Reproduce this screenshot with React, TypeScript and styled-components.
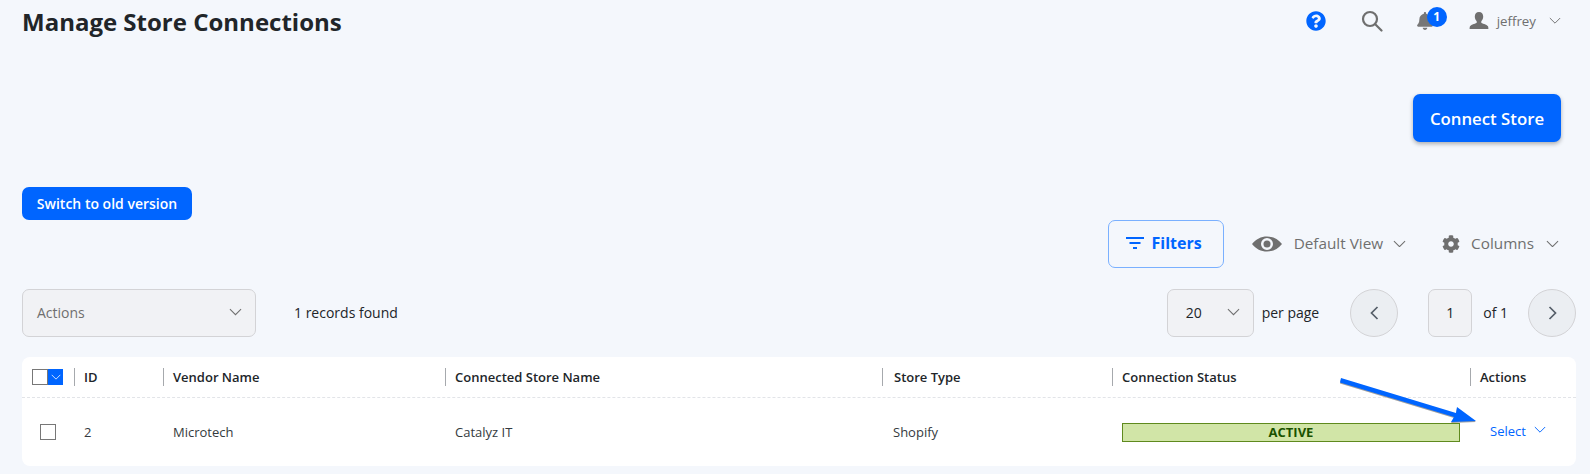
import React, { FC } from 'react';
import styled, { createGlobalStyle } from 'styled-components';
import { FaBell, FaCog, FaQuestionCircle } from 'react-icons/fa';

const GlobalStyle = createGlobalStyle`
  html, body {
    margin: 0;
    padding: 0;
    background: #f4f7fc;
    font-family: 'Open Sans', 'Noto Sans', sans-serif;
    color: #212529;
  }
`;

const BLUE = '#0065ff';
const GREY = '#6f6f6f';

const Page = styled.div`
  position: relative;
  width: 1590px;
  height: 474px;
  box-sizing: border-box;
  padding: 0 14px 0 22px;
  overflow: hidden;
`;

const TopBar = styled.header`
  display: flex;
  align-items: flex-start;
  justify-content: space-between;
  height: 46px;
`;

const Title = styled.h1`
  margin: 0;
  font-size: 24px;
  line-height: 44px;
  font-weight: 700;
  color: #212529;
`;

const TopIcons = styled.div`
  display: flex;
  align-items: center;
  height: 42px;
  margin-right: 15px;
  color: ${GREY};
`;

const HelpIcon = styled(FaQuestionCircle)`
  width: 20px;
  height: 20px;
  color: ${BLUE};
`;

const SearchSvg = styled.svg`
  width: 22px;
  height: 22px;
  margin-left: 35px;
`;

const BellWrap = styled.div`
  position: relative;
  display: flex;
  width: 18px;
  margin-left: 33px;
  color: #777;
`;

const Badge = styled.span`
  position: absolute;
  top: -5px;
  left: 11px;
  width: 20px;
  height: 20px;
  border-radius: 50%;
  background: ${BLUE};
  color: #fff;
  font-size: 12px;
  font-weight: 700;
  line-height: 20px;
  text-align: center;
`;

const UserSvg = styled.svg`
  width: 20px;
  height: 20px;
  margin-left: 35px;
`;

const UserName = styled.span`
  margin: 0 13px 0 8px;
  font-size: 13.3px;
  color: ${GREY};
`;

const ConnectRow = styled.div`
  display: flex;
  justify-content: flex-end;
  margin-top: 48px;
  padding-right: 15px;
`;

const ConnectButton = styled.button`
  width: 148px;
  height: 48px;
  border: 0;
  border-radius: 7px;
  background: ${BLUE};
  color: #fff;
  font-family: inherit;
  font-size: 16.8px;
  font-weight: 600;
  box-shadow: 0 2px 4px rgba(0, 0, 0, 0.3);
`;

const SwitchButton = styled.button`
  display: block;
  width: 170px;
  height: 33px;
  margin-top: 45px;
  padding: 0;
  border: 0;
  border-radius: 7px;
  background: ${BLUE};
  color: #fff;
  font-family: inherit;
  font-size: 14px;
  font-weight: 600;
`;

const ViewBar = styled.div`
  display: flex;
  align-items: center;
  justify-content: flex-end;
  height: 47px;
  padding-right: 17px;
`;

const FilterButton = styled.button`
  display: flex;
  align-items: center;
  justify-content: center;
  gap: 8px;
  width: 116px;
  height: 48px;
  margin-right: 28px;
  padding: 0 4px 2px 0;
  box-sizing: border-box;
  border: 1px solid #7ab0ff;
  border-radius: 7px;
  background: transparent;
  color: ${BLUE};
  font-family: inherit;
  font-size: 16px;
  font-weight: 700;
`;

const ViewOption = styled.div<{ $gap: number; $end: number }>`
  display: flex;
  align-items: center;
  gap: ${(p) => p.$gap}px;
  margin-right: ${(p) => p.$end}px;
  font-size: 15.3px;
  color: ${GREY};
`;

const ViewLabel = styled.span<{ $after?: number }>`
  margin: 0 ${(p) => p.$after ?? 1}px 2px 0;
`;

const ControlRow = styled.div`
  display: flex;
  align-items: center;
  height: 48px;
  margin-top: 22px;
`;

const Field = styled.div<{ $width: number; $pad: number }>`
  display: flex;
  align-items: center;
  justify-content: space-between;
  box-sizing: border-box;
  width: ${(p) => p.$width}px;
  height: 48px;
  padding: 0 13px 2px ${(p) => p.$pad}px;
  border: 1px solid #d3d3d6;
  border-radius: 7px;
  background: #f1f2f5;
  font-size: 14px;
`;

const ActionsText = styled.span`
  color: ${GREY};
`;

const Records = styled.span`
  margin: 0 0 2px 38px;
  font-size: 14px;
`;

const Pager = styled.div`
  display: flex;
  align-items: center;
  margin-left: auto;
  font-size: 14px;
`;

const PerPage = styled.span`
  margin: 0 31px 2px 8px;
`;

const RoundButton = styled.button`
  display: flex;
  align-items: center;
  justify-content: center;
  width: 48px;
  height: 48px;
  padding: 0;
  border: 1px solid #d3d3d6;
  border-radius: 50%;
  background: #ebeef2;
  color: #555e68;
`;

const PageBox = styled.div`
  display: flex;
  align-items: center;
  justify-content: center;
  box-sizing: border-box;
  width: 44px;
  height: 48px;
  margin-left: 30px;
  padding-bottom: 2px;
  border: 1px solid #d3d3d6;
  border-radius: 7px;
  background: #f1f2f5;
`;

const OfTotal = styled.span`
  margin: 0 20px 2px 11px;
`;

const Card = styled.section`
  height: 109px;
  margin-top: 20px;
  border-radius: 8px;
  background: #fff;
`;

const COLUMNS = '52px 89px 282px 437px 230px 358px 106px';

const HeadRow = styled.div`
  display: grid;
  grid-template-columns: ${COLUMNS};
  align-items: center;
  height: 40px;
  border-bottom: 1px dashed #e2e4e8;
  font-size: 13px;
  font-weight: 600;
`;

const HeadCell = styled.div<{ $inset?: number }>`
  display: flex;
  align-items: center;
  height: 18px;
  padding-left: ${(p) => p.$inset ?? 9}px;
  border-left: 1px solid #a6a9ad;
`;

const SelectAll = styled.div`
  display: flex;
  height: 16px;
  margin-left: 10px;
`;

const CheckBox = styled.span`
  display: block;
  box-sizing: border-box;
  width: 16px;
  height: 16px;
  border: 1px solid #777;
  background: #fff;
`;

const CheckMenu = styled.span`
  display: flex;
  align-items: center;
  justify-content: center;
  width: 15px;
  height: 16px;
  background: ${BLUE};
  color: #fff;
`;

const BodyRow = styled.div`
  display: grid;
  grid-template-columns: ${COLUMNS};
  align-items: center;
  height: 68px;
  font-size: 13px;
  color: #343a40;
`;

const CheckCell = styled.div`
  padding-left: 18px;
`;

const BodyCell = styled.div<{ $inset?: number }>`
  padding-left: ${(p) => p.$inset ?? 10}px;
`;

const StatusBar = styled.div`
  box-sizing: border-box;
  width: 338px;
  height: 19px;
  margin-left: 10px;
  border: 1px solid #5f8a1e;
  background: #d1e5a7;
  color: #1a5200;
  font-size: 13px;
  font-weight: 700;
  line-height: 17px;
  text-align: center;
`;

const SelectLink = styled.div`
  display: flex;
  align-items: flex-start;
  gap: 8px;
  margin-top: -2px;
  padding-left: 20px;
  color: ${BLUE};
`;

const SelectCaret = styled.span`
  display: flex;
  margin-top: 4px;
`;

const ArrowOverlay = styled.svg`
  position: absolute;
  top: 370px;
  left: 1330px;
  width: 160px;
  height: 70px;
  pointer-events: none;
  filter: drop-shadow(0 1px 0.5px rgba(40, 40, 40, 0.45));
`;

const Chevron: FC<{ size?: number; color?: string; dir?: 'down' | 'left' | 'right' }> = ({
  size = 13,
  color = GREY,
  dir = 'down',
}) => {
  if (dir === 'down') {
    return (
      <svg width={size} height={size * 0.6} viewBox="0 0 14 8" fill="none" stroke={color} strokeWidth="1.1">
        <path d="M1 1l6 6 6-6" />
      </svg>
    );
  }
  return (
    <svg width="9" height="14" viewBox="0 0 9 14" fill="none" stroke={color} strokeWidth="1.7">
      <path d={dir === 'left' ? 'M7.5 1L1.5 7l6 6' : 'M1.5 1l6 6-6 6'} />
    </svg>
  );
};

const App: FC = () => (
  <Page>
    <GlobalStyle />
    <TopBar>
      <Title>Manage Store Connections</Title>
      <TopIcons>
        <HelpIcon />
        <SearchSvg viewBox="0 0 22 22" fill="none" stroke={GREY} strokeWidth="2.2">
          <circle cx="9" cy="9" r="7" />
          <path d="M14 14l6.5 6.5" strokeLinecap="round" />
        </SearchSvg>
        <BellWrap>
          <FaBell size={18} />
          <Badge>1</Badge>
        </BellWrap>
        <UserSvg viewBox="0 0 20 20" fill={GREY}>
          <path d="M10 1c2.7 0 4.2 2 4.2 4.6 0 1.9-.8 3.7-1.900 4.700v1.400c0 .7 5.700 1.700 6.700 3.600.4.8.4 2.200.4 2.700H.6c0-.5 0-1.900.4-2.700 1-1.900 6.700-2.900 6.700-3.600v-1.400C6.600 9.300 5.800 7.500 5.800 5.600 5.800 3 7.300 1 10 1z" />
        </UserSvg>
        <UserName>jeffrey</UserName>
        <Chevron size={12} />
      </TopIcons>
    </TopBar>

    <ConnectRow>
      <ConnectButton>Connect Store</ConnectButton>
    </ConnectRow>

    <SwitchButton>Switch to old version</SwitchButton>

    <ViewBar>
      <FilterButton>
        <svg width="18" height="12" viewBox="0 0 18 12" fill="none" stroke={BLUE} strokeWidth="2">
          <path d="M0 1h18M3.500 6h11M7 11h4" />
        </svg>
        Filters
      </FilterButton>
      <ViewOption $gap={12} $end={36}>
        <svg width="30" height="16" viewBox="0 0 30 16" fill={GREY}>
          <path
            fillRule="evenodd"
            d="M0 8C4 3 9 .5 15 .5S26 3 30 8c-4 5-9 7.500-15 7.500S4 13 0 8zm15-6a6 6 0 1 0 0 12 6 6 0 0 0 0-12z"
          />
          <circle cx="15" cy="8" r="3.500" />
        </svg>
        <ViewLabel $after={-2}>Default View</ViewLabel>
        <Chevron />
      </ViewOption>
      <ViewOption $gap={11} $end={0}>
        <FaCog size={18} />
        <ViewLabel>Columns</ViewLabel>
        <Chevron />
      </ViewOption>
    </ViewBar>

    <ControlRow>
      <Field $width={234} $pad={14}>
        <ActionsText>Actions</ActionsText>
        <Chevron />
      </Field>
      <Records>1 records found</Records>
      <Pager>
        <Field $width={87} $pad={18}>
          20
          <Chevron />
        </Field>
        <PerPage>per page</PerPage>
        <RoundButton>
          <Chevron dir="left" color="#555e68" />
        </RoundButton>
        <PageBox>1</PageBox>
        <OfTotal>of 1</OfTotal>
        <RoundButton>
          <Chevron dir="right" color="#555e68" />
        </RoundButton>
      </Pager>
    </ControlRow>

    <Card>
      <HeadRow>
        <SelectAll>
          <CheckBox />
          <CheckMenu>
            <Chevron size={10} color="#fff" />
          </CheckMenu>
        </SelectAll>
        <HeadCell>ID</HeadCell>
        <HeadCell>Vendor Name</HeadCell>
        <HeadCell>Connected Store Name</HeadCell>
        <HeadCell $inset={11}>Store Type</HeadCell>
        <HeadCell>Connection Status</HeadCell>
        <HeadCell>Actions</HeadCell>
      </HeadRow>
      <BodyRow>
        <CheckCell>
          <CheckBox />
        </CheckCell>
        <BodyCell>2</BodyCell>
        <BodyCell>Microtech</BodyCell>
        <BodyCell>Catalyz IT</BodyCell>
        <BodyCell $inset={11}>Shopify</BodyCell>
        <StatusBar>ACTIVE</StatusBar>
        <SelectLink>
          Select
          <SelectCaret>
            <Chevron size={12} color={BLUE} />
          </SelectCaret>
        </SelectLink>
      </BodyRow>
    </Card>

    <ArrowOverlay viewBox="0 0 160 70">
      <path d="M11 8L126 43l1-6 19 14-25 1 3-5L10 12.500z" fill={BLUE} />
    </ArrowOverlay>
  </Page>
);

export default App;
